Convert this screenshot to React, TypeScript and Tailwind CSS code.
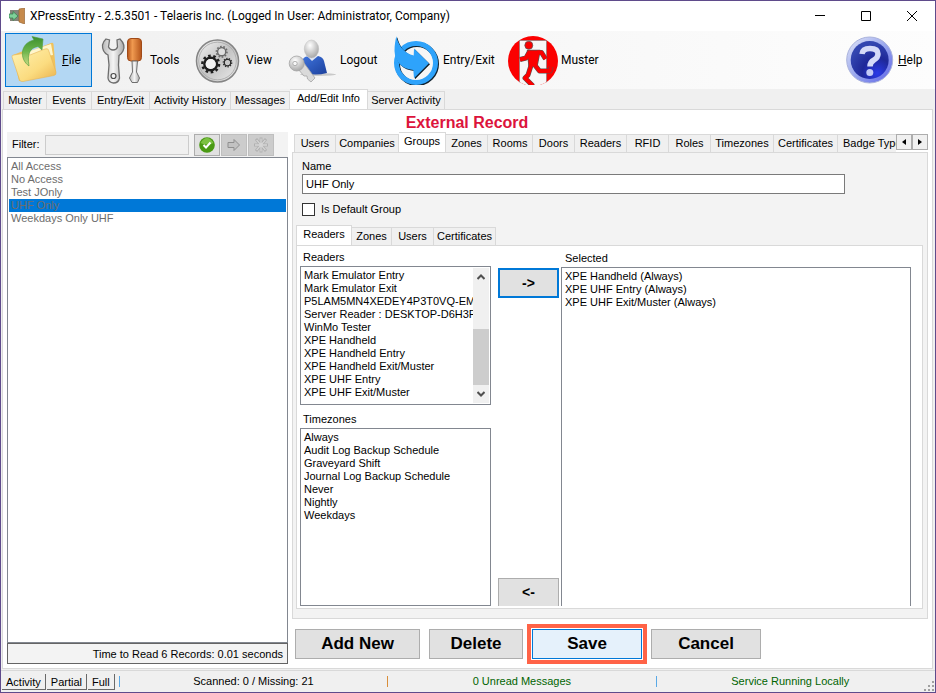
import type { ReactNode } from 'react'

const FileIcon = () => (
  <svg width="50" height="50" viewBox="0 0 50 50" aria-hidden="true">
    <defs>
      <linearGradient id="folder" x1="0" y1="0" x2="1" y2="1">
        <stop offset="0" stopColor="#fff3b4" />
        <stop offset="0.6" stopColor="#fbdc80" />
        <stop offset="1" stopColor="#e9b04a" />
      </linearGradient>
      <linearGradient id="leaf" x1="0" y1="1" x2="0" y2="0">
        <stop offset="0" stopColor="#8ecb6c" stopOpacity="0.5" />
        <stop offset="0.5" stopColor="#6cb54a" />
        <stop offset="1" stopColor="#3c8f2e" />
      </linearGradient>
    </defs>
    <path d="M4 20 L14 16 L17 18 L42 8 Q44 7 44.500 9 L47 38 L10 46 Z" fill="#f0c25c" />
    <path d="M18 17 L42 9 L44 20 L20 24 Z" fill="#fff6cc" />
    <path d="M3 22 Q2.500 20 5 20 L17 18 L21 20 L36 14 Q39 13 39.500 15 L47 37 Q47.500 40 45 40.500 L14 46.500 Q11 47 10.500 44.500 Z" fill="url(#folder)" stroke="#e6b458" strokeWidth="0.6" />
    <path d="M20 31 C10 24 11 8 25 5 L23 1.500 L34 4 L33 15 L29 11.500 C21 13 18 18 20 31 Z" fill="url(#leaf)" stroke="#4f9a3c" strokeWidth="0.6" />
  </svg>
)

const ToolsIcon = () => (
  <svg width="50" height="50" viewBox="0 0 50 50" aria-hidden="true">
    <defs>
      <linearGradient id="steel" x1="0" y1="0" x2="1" y2="0">
        <stop offset="0" stopColor="#b9b9b9" />
        <stop offset="0.5" stopColor="#f4f4f4" />
        <stop offset="1" stopColor="#a8a8a8" />
      </linearGradient>
      <linearGradient id="grip" x1="0" y1="0" x2="1" y2="0">
        <stop offset="0" stopColor="#b4541a" />
        <stop offset="0.35" stopColor="#f09a50" />
        <stop offset="1" stopColor="#b4541a" />
      </linearGradient>
    </defs>
    <path d="M9 4 L12.500 5 L11.500 12 Q13 15 16 15 Q19.500 15 20.500 12 L20 5 L23 4 Q29 10 26 16 Q24.500 19 22 20.500 L21.500 30 L22.500 43 Q21.500 48 16.500 48 Q11.500 47.500 11 43 L12 30 L11 20 Q5 17 5.500 10 Q6.500 6 9 4 Z" fill="url(#steel)" stroke="#6e6e6e" strokeWidth="1.300" />
    <circle cx="16.500" cy="41" r="2.500" fill="#f3f3f3" stroke="#4a4a4a" strokeWidth="1.200" />
    <rect x="30.500" y="3.500" width="14" height="22.500" rx="3.500" fill="url(#grip)" stroke="#a04a18" />
    <path d="M35 26 H40.500 L39.500 37 L42.500 43 L40.500 47.500 H35 L32.500 43 L35.500 37 Z" fill="url(#steel)" stroke="#6e6e6e" />
  </svg>
)

const Gear = ({ cx, cy, r, color }: { cx: number; cy: number; r: number; color: string }) => (
  <g fill="none" stroke={color}>
    <circle cx={cx} cy={cy} r={r} strokeWidth={r * 0.4} />
    <circle cx={cx} cy={cy} r={r * 1.32} strokeWidth={r * 0.4} pathLength="20" strokeDasharray="1 1" />
  </g>
)

const ViewIcon = () => (
  <svg width="50" height="50" viewBox="0 0 50 50" aria-hidden="true">
    <defs>
      <linearGradient id="dial" x1="0" y1="0" x2="1" y2="1">
        <stop offset="0" stopColor="#f6f6f6" />
        <stop offset="0.5" stopColor="#c2c2c2" />
        <stop offset="1" stopColor="#eeeeee" />
      </linearGradient>
    </defs>
    <circle cx="24.500" cy="26" r="21" fill="url(#dial)" stroke="#858585" strokeWidth="1.500" />
    <circle cx="24.500" cy="26" r="18.800" fill="none" stroke="#a6a6a6" strokeWidth="0.8" />
    <Gear cx={17.7} cy={29} r={6.3} color="#1e1e1e" />
    <circle cx="17.700" cy="29" r="5.100" fill="#f2f2f2" />
    <Gear cx={28.7} cy={16.8} r={4} color="#6a6a6a" />
    <circle cx="28.700" cy="16.800" r="3.200" fill="#dedede" />
    <Gear cx={34.5} cy={27.6} r={3.2} color="#2c2c2c" />
    <circle cx="34.500" cy="27.600" r="2.300" fill="#c8c8c8" />
  </svg>
)

const LogoutIcon = () => (
  <svg width="50" height="50" viewBox="0 0 50 50" aria-hidden="true">
    <defs>
      <radialGradient id="head" cx="0.4" cy="0.3" r="0.8">
        <stop offset="0" stopColor="#ffffff" />
        <stop offset="1" stopColor="#9c9c9c" />
      </radialGradient>
      <linearGradient id="shirt" x1="0" y1="0" x2="1" y2="1">
        <stop offset="0" stopColor="#3f74dd" />
        <stop offset="1" stopColor="#1c409c" />
      </linearGradient>
    </defs>
    <ellipse cx="31" cy="39.500" rx="18" ry="1.500" fill="#c9c9c9" />
    <path d="M15.500 25 Q17 21.500 20 21.500 L31 21 Q36 22 37 26 L40 38 Q28 41 18 38 Z" fill="url(#shirt)" />
    <path d="M20 21 L25 26 L31 21 Z" fill="#dfe6f4" />
    <ellipse cx="24.500" cy="14" rx="7.200" ry="9" fill="url(#head)" stroke="#b5b5b5" strokeWidth="0.4" />
    <path d="M11 34 L17 28 L28 43 L24 47 L20.500 44 L20 41 L17 41 Z" fill="#dadada" stroke="#a5a5a5" strokeWidth="0.8" />
    <circle cx="9.700" cy="28.500" r="7.500" fill="url(#head)" stroke="#a5a5a5" strokeWidth="0.8" />
    <circle cx="8" cy="28.500" r="2.200" fill="#f6f6f6" stroke="#8a8a8a" strokeWidth="0.6" />
  </svg>
)

const EntryExitIcon = () => {
  const arrow = 'M6.300 1.300 C8 8 12 18 23.700 20.500 L24 13.500 L39 28.300 L24 43.300 L23.300 35 C12 34 5 27 4.500 16 C4.500 10 5.500 5 6.300 1.300 Z'
  return (
    <svg width="50" height="50" viewBox="0 0 50 50" aria-hidden="true">
      <circle cx="27" cy="29" r="19.500" fill="none" stroke="#10222f" strokeWidth="5" />
      <circle cx="26" cy="28" r="19.500" fill="none" stroke="#2ea3fb" strokeWidth="5" />
      <path d={arrow} fill="#10222f" transform="translate(1 1)" />
      <path d={arrow} fill="#2ea3fb" />
    </svg>
  )
}

const MusterIcon = () => {
  const limbs = 'M12 24.500 L18 23 L21 17.500 M29 17.500 L33.500 17.500 L37.500 24 M23.500 29 L20 40 L17 43 L25 51 M26 29 L31.500 36 H42 L43 32'
  const torso = 'M19.500 15.500 L32 15.500 L29 31 L21 31 Z'
  return (
    <svg width="50" height="50" viewBox="0 0 50 50" aria-hidden="true">
      <defs>
        <clipPath id="sign"><circle cx="25" cy="26" r="25" /></clipPath>
      </defs>
      <circle cx="25" cy="26" r="25" fill="#fb0000" />
      <path d="M11.500 5.500 H38.500 V51 H11.500 Z" fill="#f7f7f7" stroke="#777" strokeWidth="0.6" clipPath="url(#sign)" />
      <circle cx="20.800" cy="10.300" r="4" fill="#fb0000" stroke="#555" strokeWidth="0.7" />
      <g fill="none" strokeLinejoin="round">
        <path d={limbs} stroke="#555" strokeWidth="5" />
        <path d={torso} fill="#555" stroke="#555" strokeWidth="1.400" />
        <path d={limbs} stroke="#fb0000" strokeWidth="3.900" />
        <path d={torso} fill="#fb0000" />
      </g>
    </svg>
  )
}

const HelpIcon = () => (
  <svg width="50" height="50" viewBox="0 0 50 50" aria-hidden="true">
    <defs>
      <linearGradient id="rim" x1="0" y1="0" x2="1" y2="1">
        <stop offset="0" stopColor="#e4e8f8" />
        <stop offset="0.5" stopColor="#9aa8ee" />
        <stop offset="1" stopColor="#5c62e6" />
      </linearGradient>
      <radialGradient id="ball" cx="0.7" cy="0.85" r="0.8">
        <stop offset="0" stopColor="#2a3ae8" />
        <stop offset="0.5" stopColor="#1f2898" />
        <stop offset="1" stopColor="#3346b0" />
      </radialGradient>
    </defs>
    <circle cx="24.700" cy="25" r="23" fill="url(#rim)" stroke="#a9b2dc" />
    <circle cx="24.700" cy="25" r="19" fill="url(#ball)" />
    <path d="M17 19 Q17.500 13.500 25 13.500 Q33 13.500 33 19 Q33 22.500 29 25 Q25 27 25 31.500" fill="none" stroke="#d5daf8" strokeWidth="5.500" />
    <circle cx="24.800" cy="37.500" r="3.500" fill="#c3caf6" />
  </svg>
)

const AppIcon = () => (
  <svg width="16" height="16" viewBox="0 0 16 16" aria-hidden="true">
    <path d="M1 2 H11 V13 H1 Z" fill="#84847a" />
    <path d="M10 1 L15.500 0 V16 L10 14 Z" fill="#c68a4c" stroke="#8f5a26" strokeWidth="0.6" />
    <path d="M0 6 H4 V3.500 L9 8 L4 12.500 V10 H0 Z" fill="#7fd09a" stroke="#2f7f48" strokeWidth="0.7" />
  </svg>
)

const Tool = ({ icon, className = '', children }: { icon: ReactNode; className?: string; children: ReactNode }) => (
  <button type="button" className={`flex h-[54px] shrink-0 items-center gap-[3px] border pl-[3px] text-left ${className}`}>
    {icon}
    <span>{children}</span>
  </button>
)

type TabItem = { label: string; width: string }

const mainTabs: TabItem[] = [
  { label: 'Muster', width: 'w-[44px]' },
  { label: 'Events', width: 'w-[45px]' },
  { label: 'Entry/Exit', width: 'w-[58px]' },
  { label: 'Activity History', width: 'w-[81px]' },
  { label: 'Messages', width: 'w-[59px]' },
  { label: 'Add/Edit Info', width: 'w-[78px]' },
  { label: 'Server Activity', width: 'w-[77px]' },
]

const recordTabs: TabItem[] = [
  { label: 'Users', width: 'w-[42px]' },
  { label: 'Companies', width: 'w-[63px]' },
  { label: 'Groups', width: 'w-[47px]' },
  { label: 'Zones', width: 'w-[42px]' },
  { label: 'Rooms', width: 'w-[45px]' },
  { label: 'Doors', width: 'w-[42px]' },
  { label: 'Readers', width: 'w-[52px]' },
  { label: 'RFID', width: 'w-[42px]' },
  { label: 'Roles', width: 'w-[42px]' },
  { label: 'Timezones', width: 'w-[63px]' },
  { label: 'Certificates', width: 'w-[64px]' },
  { label: 'Badge Types', width: 'w-[75px]' },
]

const groupTabs: TabItem[] = [
  { label: 'Readers', width: 'w-[56px]' },
  { label: 'Zones', width: 'w-[40px]' },
  { label: 'Users', width: 'w-[42px]' },
  { label: 'Certificates', width: 'w-[62px]' },
]

const Tabs = ({ tabs, active }: { tabs: TabItem[]; active: string }) => (
  <div role="tablist" className="flex h-5 min-w-0 flex-1 items-end overflow-hidden">
    {tabs.map(({ label, width }) => {
      const on = label === active
      return (
        <button
          key={label}
          type="button"
          role="tab"
          aria-selected={on}
          className={`${width} shrink-0 border-t border-r border-[#d9d9d9] whitespace-nowrap first:border-l ${
            on ? 'h-5 bg-white pb-1' : 'h-[18px] bg-[#f0f0f0]'
          }`}
        >
          {label}
        </button>
      )
    })}
  </div>
)

const ListBox = ({ label, items, selected, className = '' }: { label: string; items: string[]; selected?: string; className?: string }) => (
  <ul role="listbox" aria-label={label} className={`overflow-hidden ${className}`}>
    {items.map((item) => (
      <li
        key={item}
        role="option"
        aria-selected={item === selected}
        className={`px-0.5 leading-[13px] whitespace-nowrap ${item === selected ? 'bg-[#0078d7]' : ''}`}
      >
        {item}
      </li>
    ))}
  </ul>
)

const groups = ['All Access', 'No Access', 'Test JOnly', 'UHF Only', 'Weekdays Only UHF']

const readers = [
  'Mark Emulator Entry',
  'Mark Emulator Exit',
  'P5LAM5MN4XEDEY4P3T0VQ-EMU',
  'Server Reader : DESKTOP-D6H3F5',
  'WinMo Tester',
  'XPE Handheld',
  'XPE Handheld Entry',
  'XPE Handheld Exit/Muster',
  'XPE UHF Entry',
  'XPE UHF Exit/Muster',
]

const timezones = ['Always', 'Audit Log Backup Schedule', 'Graveyard Shift', 'Journal Log Backup Schedule', 'Never', 'Nightly', 'Weekdays']

const selectedReaders = ['XPE Handheld (Always)', 'XPE UHF Entry (Always)', 'XPE UHF Exit/Muster (Always)']

const TitleBar = () => (
  <header className="flex h-[30px] shrink-0 items-center bg-white pl-2 font-[Roboto,sans-serif] text-[12px]">
    <AppIcon />
    <h1 className="ml-[5px] flex-1 whitespace-nowrap">XPressEntry - 2.5.3501 - Telaeris Inc. (Logged In User: Administrator, Company)</h1>
    <button type="button" aria-label="Minimize" className="flex w-[46px] justify-center">
      <svg width="10" height="10" viewBox="0 0 10 10"><path d="M0 4.500 H10" stroke="#000" /></svg>
    </button>
    <button type="button" aria-label="Maximize" className="flex w-[46px] justify-center">
      <svg width="10" height="10" viewBox="0 0 10 10"><path d="M0.500 0.500 H9.500 V9.500 H0.500 Z" fill="none" stroke="#000" /></svg>
    </button>
    <button type="button" aria-label="Close" className="flex w-[46px] justify-center">
      <svg width="10" height="10" viewBox="0 0 10 10"><path d="M0 0 L10 10 M10 0 L0 10" stroke="#000" /></svg>
    </button>
  </header>
)

const Toolbar = () => (
  <nav className="flex h-[58px] shrink-0 items-center bg-linear-to-r from-[#f0f0f0] to-[#fdfdfd] px-1 font-[Roboto,sans-serif] text-[12px]">
    <Tool icon={<FileIcon />} className="mr-px w-[87px] border-[#0078d7] bg-[#b3d7f3]"><u>F</u>ile</Tool>
    <Tool icon={<ToolsIcon />} className="w-[96px] border-transparent">Tools</Tool>
    <Tool icon={<ViewIcon />} className="w-[94px] border-transparent">View</Tool>
    <Tool icon={<LogoutIcon />} className="w-[103px] border-transparent">Logout</Tool>
    <Tool icon={<EntryExitIcon />} className="w-[118px] border-transparent">Entry/Exit</Tool>
    <Tool icon={<MusterIcon />} className="border-transparent">Muster</Tool>
    <Tool icon={<HelpIcon />} className="ml-auto w-[90px] border-transparent"><u>H</u>elp</Tool>
  </nav>
)

const GroupList = () => (
  <section className="flex w-[281px] shrink-0 flex-col pt-[22px]">
    <div className="flex h-[25px] items-center bg-[#f3f3f3] pl-[5px]">
      <label htmlFor="filter" className="w-[33px]">Filter:</label>
      <input id="filter" disabled className="h-5 w-[144px] border border-[#ccc] bg-[#f0f0f0] px-1" />
      <div className="ml-[5px] flex gap-px">
        <button type="button" aria-label="Apply filter" className="flex h-[22px] w-[26px] items-center justify-center border border-[#adadad] bg-[#e1e1e1]">
          <svg width="16" height="16" viewBox="0 0 16 16">
            <circle cx="8" cy="8" r="7.800" fill="#4a9a14" />
            <path d="M1.500 6 Q8 -4 14.500 6 Q8 9 1.500 6 Z" fill="#7cc142" />
            <path d="M4.500 8 L7 10.500 L11.500 5.500" fill="none" stroke="#fff" strokeWidth="2" />
          </svg>
        </button>
        <button type="button" aria-label="Next" disabled className="flex h-[22px] w-[26px] items-center justify-center border border-[#bfbfbf] bg-[#ccc]">
          <svg width="14" height="14" viewBox="0 0 14 14">
            <path d="M1 4.500 H7 V1.500 L12.500 7 L7 12.500 V9.500 H1 Z" fill="#c2c2c2" stroke="#8f8f8f" />
          </svg>
        </button>
        <button type="button" aria-label="Clear" disabled className="flex h-[22px] w-[26px] items-center justify-center border border-[#bfbfbf] bg-[#ccc]">
          <svg width="16" height="16" viewBox="0 0 16 16" fill="none">
            <path d="M8 0.500 V15.500 M1 8 H15 M3 2 L13 14 M13 2 L3 14" stroke="#b0b0b0" strokeWidth="2.800" />
            <path d="M8 1.500 V14.500 M2 8 H14 M3.600 2.800 L12.400 13.200 M12.400 2.800 L3.600 13.200" stroke="#d6d6d6" strokeWidth="1.300" />
          </svg>
        </button>
      </div>
    </div>
    <ListBox label="Groups" items={groups} selected="UHF Only" className="flex-1 border border-[#828790] bg-white px-px py-0.5 text-[#6d6d6d]" />
    <p className="h-[21px] border border-[#646464] bg-[#f3f3f3] pr-1 text-right leading-5">Time to Read 6 Records: 0.01 seconds</p>
  </section>
)

const ReaderPicker = () => (
  <div className="flex flex-1 border border-[#d9d9d9] bg-white px-[3px] pt-[3px] pb-0.5">
    <div className="flex w-[191px] flex-col">
      <h3 className="mb-px pl-[3px] leading-4">Readers</h3>
      <div className="flex h-[139px] border border-[#828790] p-px">
        <ListBox label="Readers" items={readers} className="min-w-0 flex-1 pt-px" />
        <div className="flex w-4 flex-col bg-[#f0f0f0] pb-px">
          <button type="button" aria-label="Scroll up" className="flex h-[17px] items-center justify-center">
            <svg width="8" height="6" viewBox="0 0 8 6"><path d="M0.500 5 L4 1.500 L7.500 5" fill="none" stroke="#505050" strokeWidth="2" /></svg>
          </button>
          <div className="mt-auto h-14 bg-[#cdcdcd]" />
          <button type="button" aria-label="Scroll down" className="flex h-[17px] items-center justify-center">
            <svg width="8" height="6" viewBox="0 0 8 6"><path d="M0.500 1 L4 4.500 L7.500 1" fill="none" stroke="#505050" strokeWidth="2" /></svg>
          </button>
        </div>
      </div>
      <h3 className="mt-1.5 mb-px pl-[3px] leading-4">Timezones</h3>
      <ListBox label="Timezones" items={timezones} className="flex-1 border border-[#828790] px-px py-0.5" />
    </div>
    <div className="ml-[7px] flex w-[61px] flex-col justify-between pt-[19px] text-[14px] font-bold">
      <button type="button" aria-label="Add reader" className="h-[30px] border-2 border-[#0078d7] bg-[#e1e1e1]">-&gt;</button>
      <button type="button" aria-label="Remove reader" className="h-7 border border-b-0 border-[#adadad] bg-[#e1e1e1]">&lt;-</button>
    </div>
    <div className="mr-2 ml-0.5 flex min-w-0 flex-1 flex-col pt-px">
      <h3 className="mb-px pl-1 leading-4">Selected</h3>
      <ListBox label="Selected" items={selectedReaders} className="flex-1 border border-b-0 border-[#828790] px-px py-0.5" />
    </div>
  </div>
)

const action = 'h-[30px] border border-[#adadad] bg-[#e1e1e1]'

const RecordEditor = () => (
  <section className="flex min-w-0 flex-1 flex-col pt-1">
    <h2 className="mr-[290px] text-center text-[16px] leading-[18px] font-bold text-[#dc143c]">External Record</h2>
    <div className="flex pr-1 pl-0.5">
      <Tabs tabs={recordTabs} active="Groups" />
      <div className="flex shrink-0 pt-0.5">
        {['Scroll tabs left', 'Scroll tabs right'].map((name, i) => (
          <button key={name} type="button" aria-label={name} className="flex h-4 w-4 items-center justify-center border border-[#adadad] bg-[#f0f0f0]">
            <svg width="4" height="6" viewBox="0 0 4 6"><path d={i ? 'M0 0 L4 3 L0 6 Z' : 'M4 0 L0 3 L4 6 Z'} /></svg>
          </button>
        ))}
      </div>
    </div>
    <div className="mr-1 flex flex-1 flex-col border border-[#d9d9d9] bg-[#f3f3f3] pt-[5px] pr-1 pb-[9px] pl-[3px]">
      <form className="pl-1.5">
        <label htmlFor="name" className="block leading-4">Name</label>
        <input id="name" defaultValue="UHF Only" className="block h-5 w-[543px] max-w-full border border-[#7a7a7a] bg-white px-[3px]" />
        <label className="mt-[9px] flex items-center gap-1.5 leading-[13px]">
          <input type="checkbox" className="size-[13px] appearance-none border border-[#333] bg-white" />
          Is Default Group
        </label>
      </form>
      <div className="mt-[9px] flex">
        <Tabs tabs={groupTabs} active="Readers" />
      </div>
      <ReaderPicker />
    </div>
    <div className="flex items-center pt-[5px] pl-[3px] text-[17px] font-bold">
      <button type="button" className={`${action} w-[125px]`}>Add New</button>
      <button type="button" className={`${action} ml-[9px] w-[94px]`}>Delete</button>
      <div className="ml-1 border-4 border-[#ff6347] p-px">
        <button type="button" className="block h-[30px] w-[110px] border border-[#0078d7] bg-[#e5f1fb]">Save</button>
      </div>
      <button type="button" className={`${action} ml-1 w-[110px]`}>Cancel</button>
    </div>
  </section>
)

const StatusBar = () => (
  <footer className="flex h-[22px] shrink-0 items-center border-t border-[#d9d9d9] bg-[#f0f0f0] pl-px">
    <div className="flex gap-px">
      {['Activity', 'Partial', 'Full'].map((name) => (
        <button key={name} type="button" className="h-4 border-r border-b border-[#696969] px-1 leading-4">{name}</button>
      ))}
    </div>
    <span className="ml-1 h-[11px] w-px bg-[#5aa9e6]" />
    <span className="flex-1 text-center">Scanned: 0 / Missing: 21</span>
    <span className="h-[11px] w-px bg-[#d98e3a]" />
    <span className="flex-1 text-center text-[#006400]">0 Unread Messages</span>
    <span className="h-[11px] w-px bg-[#5aa9e6]" />
    <span className="flex-1 text-center text-[#006400]">Service Running Locally</span>
    <svg width="11" height="11" viewBox="0 0 11 11" fill="#a0a0a0" className="self-end" aria-hidden="true">
      <path d="M8 0h2v2h-2z M8 4h2v2h-2z M4 4h2v2h-2z M8 8h2v2h-2z M4 8h2v2h-2z M0 8h2v2h-2z" />
    </svg>
  </footer>
)

export default function App() {
  return (
    <div className="flex min-h-screen flex-col border border-[#5f4b8b] bg-[#f0f0f0] font-['Liberation_Sans',Arial,sans-serif] text-[11px] text-black">
      <TitleBar />
      <Toolbar />
      <div className="flex pl-0.5">
        <Tabs tabs={mainTabs} active="Add/Edit Info" />
      </div>
      <main className="mr-0.5 mb-px ml-px flex flex-1 gap-1 border border-[#d9d9d9] bg-white pb-1 pl-1">
        <GroupList />
        <RecordEditor />
      </main>
      <StatusBar />
    </div>
  )
}
